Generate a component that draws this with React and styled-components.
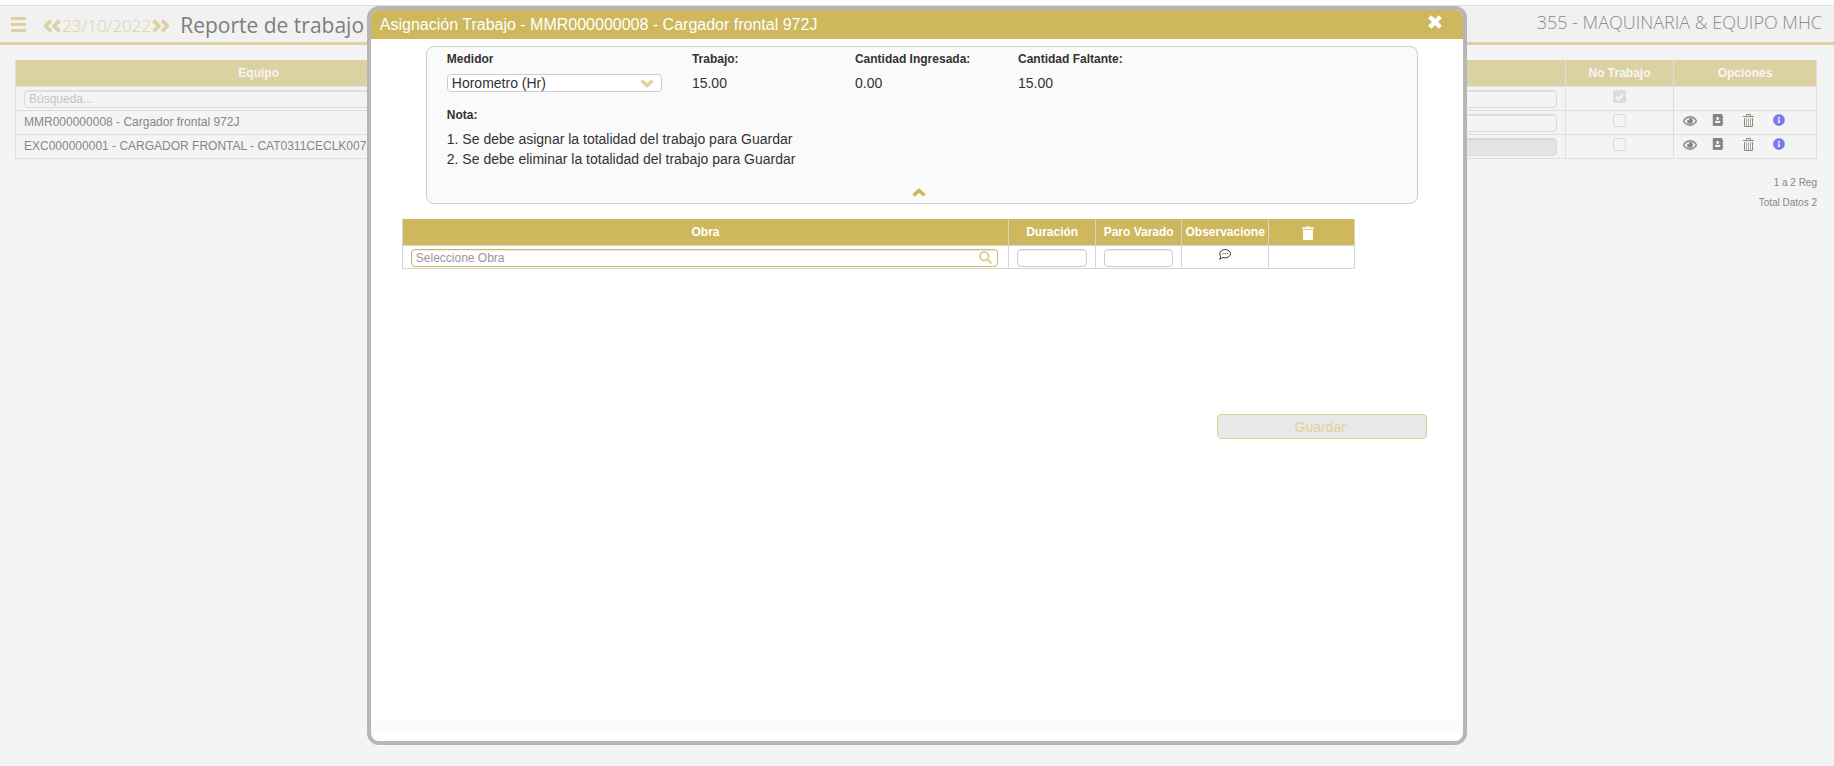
import React from "react";
import styled, { createGlobalStyle, css } from "styled-components";
import {
  FaAddressBook,
  FaInfoCircle,
  FaRegEye,
  FaSearch,
} from "react-icons/fa";

const gold = "#ceb75c";
const fadedGold = "#dcd1a3";

const GlobalStyle = createGlobalStyle`
  *, *::before, *::after { box-sizing: border-box; }
  body {
    margin: 0;
    background: #f4f4f4;
    font-family: "Liberation Sans", Arial, sans-serif;
    font-size: 12px;
    color: #333;
  }
`;

const Page = styled.div`
  min-height: 100vh;
  border-top: 5px solid #fff;
`;

const Header = styled.header`
  display: flex;
  align-items: center;
  height: 40px;
  padding: 0 12px 0 11px;
  border-top: 1px solid #dfdfdf;
  border-bottom: 3px solid ${fadedGold};
  background: #f1f1f1;
  font-family: "Open Sans", "Segoe UI", sans-serif;
`;

const IconButton = styled.button`
  display: inline-flex;
  align-items: center;
  justify-content: center;
  padding: 0;
  border: 0;
  background: none;
  color: ${(p) => p.$color || fadedGold};
  cursor: pointer;
`;

const DateNav = styled.div`
  display: flex;
  align-items: center;
  gap: 1px;
  margin-left: 17px;
  padding-top: 4px;
  color: ${fadedGold};
  font-size: 17px;
  font-weight: 300;
  line-height: 24px;
`;

const PageTitle = styled.h1`
  margin: 0 auto 0 10px;
  padding-top: 2px;
  color: #7d7d7d;
  font-size: 21px;
  font-weight: 400;
  line-height: 28px;
`;

const Company = styled.span`
  padding-bottom: 4px;
  color: #8c8c8c;
  font-size: 18px;
  font-weight: 300;
  line-height: 24px;
`;

const Main = styled.main`
  padding: 15px 17px 0 15px;
`;

const Table = styled.table`
  width: 100%;
  table-layout: fixed;
  border-collapse: collapse;

  th {
    height: 26px;
    padding: 0;
    border: 1px solid ${(p) => p.$line};
    border-top: 0;
    background: ${(p) => p.$head};
    color: ${(p) => p.$headText};
    font-size: 12px;
    line-height: 14px;
    white-space: nowrap;
  }
  td {
    height: 24px;
    padding: 0 8px;
    border: 1px solid ${(p) => p.$line};
    vertical-align: middle;
    white-space: nowrap;
    overflow: hidden;
  }
`;

const ReportTable = styled(Table)`
  color: #868686;
`;

const CenterCell = styled.td`
  text-align: center;
`;

const TextField = styled.input`
  display: block;
  width: 100%;
  height: 18px;
  margin: 2px 0 0;
  padding: 0 4px;
  border: 1px solid #ccc;
  border-radius: 4px;
  background: #fff;
  box-shadow: inset 0 1px 1px rgba(0, 0, 0, 0.08);
  font: 12px "Liberation Sans", Arial, sans-serif;
  outline: none;
  &::placeholder { color: #999; opacity: 1; }
  ${(p) =>
    p.$faded &&
    css`
      border-color: #dcdcdc;
      background: ${p.disabled ? "#e4e4e4" : "#f4f4f4"};
      &::placeholder { color: #c4c4c4; }
    `}
  ${(p) =>
    p.$active &&
    css`
      border-color: ${gold};
    `}
`;

const Check = styled.input`
  display: block;
  width: 13px;
  height: 13px;
  margin: 0 auto 3px;
  appearance: none;
  border: 1px solid #dcdcdc;
  border-radius: 2px;
  background: #f4f4f4;
  &:checked {
    background: #dcdcdc
      url("data:image/svg+xml,%3Csvg xmlns='http://www.w3.org/2000/svg' viewBox='0 0 11 11'%3E%3Cpath d='M2 6l2.5 2.5L9 3' fill='none' stroke='%23f6f6f6' stroke-width='2'/%3E%3C/svg%3E");
  }
`;

const Options = styled.div`
  display: grid;
  grid-template-columns: 29px 31px 30px 12px;
  justify-items: start;
  align-items: start;
  padding: 0 0 3px 1px;
`;

const Totals = styled.div`
  padding-top: 14px;
  color: #868686;
  font-size: 10px;
  line-height: 20px;
  text-align: right;
`;

const Overlay = styled.div`
  position: fixed;
  inset: 0;
  display: flex;
  align-items: flex-start;
  justify-content: center;
  padding: 6px 0 21px;
`;

const Dialog = styled.section`
  display: flex;
  flex-direction: column;
  width: 60%;
  height: 100%;
  padding-bottom: 9px;
  border: 4px solid #b6b6b6;
  border-radius: 12px;
  background: #fff;
  overflow: hidden;
`;

const DialogHeader = styled.header`
  display: flex;
  align-items: center;
  justify-content: space-between;
  height: 29px;
  padding: 0 21px 0 9px;
  background: ${gold};
  color: #fff;
`;

const DialogTitle = styled.h2`
  margin: 0;
  font-size: 16px;
  font-weight: 400;
  line-height: 18px;
`;

const CloseButton = styled(IconButton)`
  padding-bottom: 5px;
`;

const DialogBody = styled.div`
  flex: 1;
  padding: 7px 36px 0 31px;
`;

const DialogFooter = styled.footer`
  height: 12px;
  background: #fbfbfb;
`;

const Summary = styled.section`
  display: flex;
  flex-direction: column;
  margin: 0 9px 0 24px;
  padding: 5px 0 6px 20px;
  border: 1px solid #ccc;
  border-radius: 8px;
  background: #fafafa;
`;

const Fields = styled.div`
  display: grid;
  grid-template-columns: 245fr 163fr 163fr 399fr;
`;

const Field = styled.div`
  display: flex;
  flex-direction: column;
  gap: 7px;
`;

const Label = styled.label`
  font-size: 12px;
  font-weight: 700;
  line-height: 15px;
`;

const Value = styled.output`
  font-size: 14px;
  line-height: 18px;
`;

const SelectWrap = styled.div`
  display: flex;
  align-items: center;
  position: relative;
  width: 215px;
  color: #e0d398;
  svg {
    position: absolute;
    right: 8px;
    pointer-events: none;
  }
`;

const Select = styled.select`
  width: 100%;
  height: 18px;
  padding: 0 4px;
  appearance: none;
  border: 1px solid #ccc;
  border-radius: 4px;
  background: #fff;
  color: #333;
  font: 14px/16px "Liberation Sans", Arial, sans-serif;
`;

const NoteTitle = styled.h3`
  margin: 16px 0 6px;
  font-size: 12px;
  line-height: 15px;
`;

const Notes = styled.div`
  font-size: 14px;
  line-height: 20px;
`;

const CollapseButton = styled(IconButton)`
  align-self: center;
  margin: 19px 26px 0 0;
`;

const WorkTable = styled.div`
  margin: 15px 72px 0 0;
  td { height: 23px; }
`;

const SearchField = styled.div`
  display: flex;
  align-items: center;
  position: relative;
  margin-right: 2px;
  svg {
    position: absolute;
    top: 4px;
    right: 6px;
    color: #e0d398;
  }
`;

const HeadIcon = styled.span`
  display: flex;
  justify-content: center;
  padding: 3px 8px 0 0;
`;

const CommentButton = styled(IconButton)`
  display: flex;
  margin: 0 auto;
  padding-bottom: 4px;
`;

const Actions = styled.div`
  display: flex;
  justify-content: flex-end;
  margin-top: 145px;
`;

const SaveButton = styled.button`
  width: 210px;
  height: 25px;
  padding: 1px 4px 0 0;
  border: 1px solid #e0d398;
  border-radius: 4px;
  background: #e8e8e8;
  color: #e0d398;
  font: 14px "Liberation Sans", Arial, sans-serif;
`;

const MenuIcon = () => (
  <svg width="15" height="15" viewBox="0 0 15 15" fill="currentColor">
    <path d="M0 0h15v3H0zM0 6h15v3H0zM0 12h15v3H0z" />
  </svg>
);

const DoubleAngleIcon = ({ right }) => (
  <svg
    width="18"
    height="14"
    viewBox="0 0 18 14"
    fill="none"
    stroke="currentColor"
    strokeWidth="3.6"
    strokeLinejoin="round"
  >
    <path
      d={right ? "M1.5 1.5L7 7l-5.5 5.5M10 1.5L15.5 7 10 12.5" : "M8 1.5L2.5 7 8 12.5M16.5 1.5L11 7l5.5 5.5"}
    />
  </svg>
);

const CloseIcon = () => (
  <svg width="14" height="14" viewBox="0 0 14 14" fill="none" stroke="#fff" strokeWidth="4.4">
    <path d="M1.7 1.7l10.6 10.6M12.3 1.7L1.7 12.3" />
  </svg>
);

const ChevronIcon = ({ up }) => (
  <svg width="14" height="9" viewBox="0 0 14 9" fill="none" stroke="currentColor" strokeWidth="3.6">
    <path d={up ? "M1.5 7.5L7 2.5l5.5 5" : "M1.5 1.5L7 6.5l5.5-5"} />
  </svg>
);

const TrashLinesIcon = () => (
  <svg width="11" height="13" viewBox="0 0 11 13" fill="none" stroke="#8c8a86">
    <path d="M0 2.5h11M3.500 2V.5h4V2M1.500 4v8.500h8V4" />
    <path d="M3.500 4v8M5.500 4v8M7.500 4v8" stroke="#b9ad92" />
  </svg>
);

const TrashIcon = () => (
  <svg width="12" height="14" viewBox="0 0 12 14" fill="#fffdf5">
    <path d="M0 1.5h3.2L4 .4h4l.8 1.1H12v1.7H0zM1 4h10v9q0 1-1 1H2q-1 0-1-1z" />
  </svg>
);

const CommentIcon = () => (
  <svg width="12" height="11" viewBox="0 0 12 11" fill="none" stroke="#333" strokeLinejoin="round">
    <path d="M1.6 7.2C-.6 4.2 2 .6 6.3.6c2.9 0 5.2 1.8 5.2 4.1s-2.3 4.1-5.2 4.1c-.8 0-1.6-.1-2.3-.4-.8.8-1.8 1.5-3.4 1.7.6-.8 1-1.7 1-2.9z" />
    <path d="M3.4 4.7h1M5.8 4.7h1M8.2 4.7h1" />
  </svg>
);

const equipment = [
  { name: "MMR000000008 - Cargador frontal 972J", locked: false },
  { name: "EXC000000001 - CARGADOR FRONTAL - CAT0311CECLK007", locked: true },
];

function RowOptions() {
  return (
    <Options>
      <IconButton $color="#868686" aria-label="Ver">
        <FaRegEye size={14} stroke="currentColor" strokeWidth="16" />
      </IconButton>
      <IconButton $color="#868686" aria-label="Detalle"><FaAddressBook size={12} /></IconButton>
      <IconButton aria-label="Eliminar"><TrashLinesIcon /></IconButton>
      <IconButton $color="#7878f4" aria-label="Información"><FaInfoCircle size={12} /></IconButton>
    </Options>
  );
}

function Report() {
  return (
    <Page>
      <Header>
        <IconButton aria-label="Menú"><MenuIcon /></IconButton>
        <DateNav>
          <IconButton aria-label="Día anterior"><DoubleAngleIcon /></IconButton>
          <span>23/10/2022</span>
          <IconButton aria-label="Día siguiente"><DoubleAngleIcon right /></IconButton>
        </DateNav>
        <PageTitle>Reporte de trabajo</PageTitle>
        <Company>355 - MAQUINARIA &amp; EQUIPO MHC</Company>
      </Header>
      <Main>
        <ReportTable $line="#dfdfdf" $head={fadedGold} $headText="#f6f6f6">
          <colgroup>
            <col style={{ width: "27%" }} />
            <col />
            <col style={{ width: "108px" }} />
            <col style={{ width: "143px" }} />
          </colgroup>
          <thead>
            <tr>
              <th>Equipo</th>
              <th />
              <th>No Trabajo</th>
              <th>Opciones</th>
            </tr>
          </thead>
          <tbody>
            <tr>
              <td><TextField $faded placeholder="Búsqueda..." aria-label="Búsqueda" /></td>
              <td><TextField $faded aria-label="Filtro" /></td>
              <CenterCell><Check type="checkbox" defaultChecked aria-label="No Trabajo" /></CenterCell>
              <td />
            </tr>
            {equipment.map((item) => (
              <tr key={item.name}>
                <td>{item.name}</td>
                <td><TextField $faded disabled={item.locked} aria-label="Observación" /></td>
                <CenterCell><Check type="checkbox" aria-label="No Trabajo" /></CenterCell>
                <td><RowOptions /></td>
              </tr>
            ))}
          </tbody>
        </ReportTable>
        <Totals>
          <div>1 a 2 Reg</div>
          <div>Total Datos 2</div>
        </Totals>
      </Main>
    </Page>
  );
}

function AssignDialog() {
  return (
    <Overlay>
      <Dialog role="dialog" aria-labelledby="dialog-title">
        <DialogHeader>
          <DialogTitle id="dialog-title">
            Asignación Trabajo - MMR000000008 - Cargador frontal 972J
          </DialogTitle>
          <CloseButton aria-label="Cerrar"><CloseIcon /></CloseButton>
        </DialogHeader>
        <DialogBody>
          <Summary>
            <Fields>
              <Field>
                <Label htmlFor="medidor">Medidor</Label>
                <SelectWrap>
                  <Select id="medidor"><option>Horometro (Hr)</option></Select>
                  <ChevronIcon />
                </SelectWrap>
              </Field>
              <Field>
                <Label htmlFor="trabajo">Trabajo:</Label>
                <Value id="trabajo">15.00</Value>
              </Field>
              <Field>
                <Label htmlFor="ingresada">Cantidad Ingresada:</Label>
                <Value id="ingresada">0.00</Value>
              </Field>
              <Field>
                <Label htmlFor="faltante">Cantidad Faltante:</Label>
                <Value id="faltante">15.00</Value>
              </Field>
            </Fields>
            <NoteTitle>Nota:</NoteTitle>
            <Notes>
              <div>1. Se debe asignar la totalidad del trabajo para Guardar</div>
              <div>2. Se debe eliminar la totalidad del trabajo para Guardar</div>
            </Notes>
            <CollapseButton $color={gold} aria-label="Contraer"><ChevronIcon up /></CollapseButton>
          </Summary>
          <WorkTable>
            <Table $line="#d4d4d4" $head={gold} $headText="#fff">
              <colgroup>
                <col />
                <col style={{ width: "87px" }} />
                <col style={{ width: "86px" }} />
                <col style={{ width: "87px" }} />
                <col style={{ width: "86px" }} />
              </colgroup>
              <thead>
                <tr>
                  <th>Obra</th>
                  <th>Duración</th>
                  <th>Paro Varado</th>
                  <th>Observacione</th>
                  <th aria-label="Eliminar"><HeadIcon><TrashIcon /></HeadIcon></th>
                </tr>
              </thead>
              <tbody>
                <tr>
                  <td>
                    <SearchField>
                      <TextField $active placeholder="Seleccione Obra" aria-label="Obra" />
                      <FaSearch size={13} />
                    </SearchField>
                  </td>
                  <td><TextField aria-label="Duración" /></td>
                  <td><TextField aria-label="Paro Varado" /></td>
                  <CenterCell>
                    <CommentButton aria-label="Observaciones"><CommentIcon /></CommentButton>
                  </CenterCell>
                  <td />
                </tr>
              </tbody>
            </Table>
          </WorkTable>
          <Actions><SaveButton disabled>Guardar</SaveButton></Actions>
        </DialogBody>
        <DialogFooter />
      </Dialog>
    </Overlay>
  );
}

export default function App() {
  return (
    <>
      <GlobalStyle />
      <Report />
      <AssignDialog />
    </>
  );
}
